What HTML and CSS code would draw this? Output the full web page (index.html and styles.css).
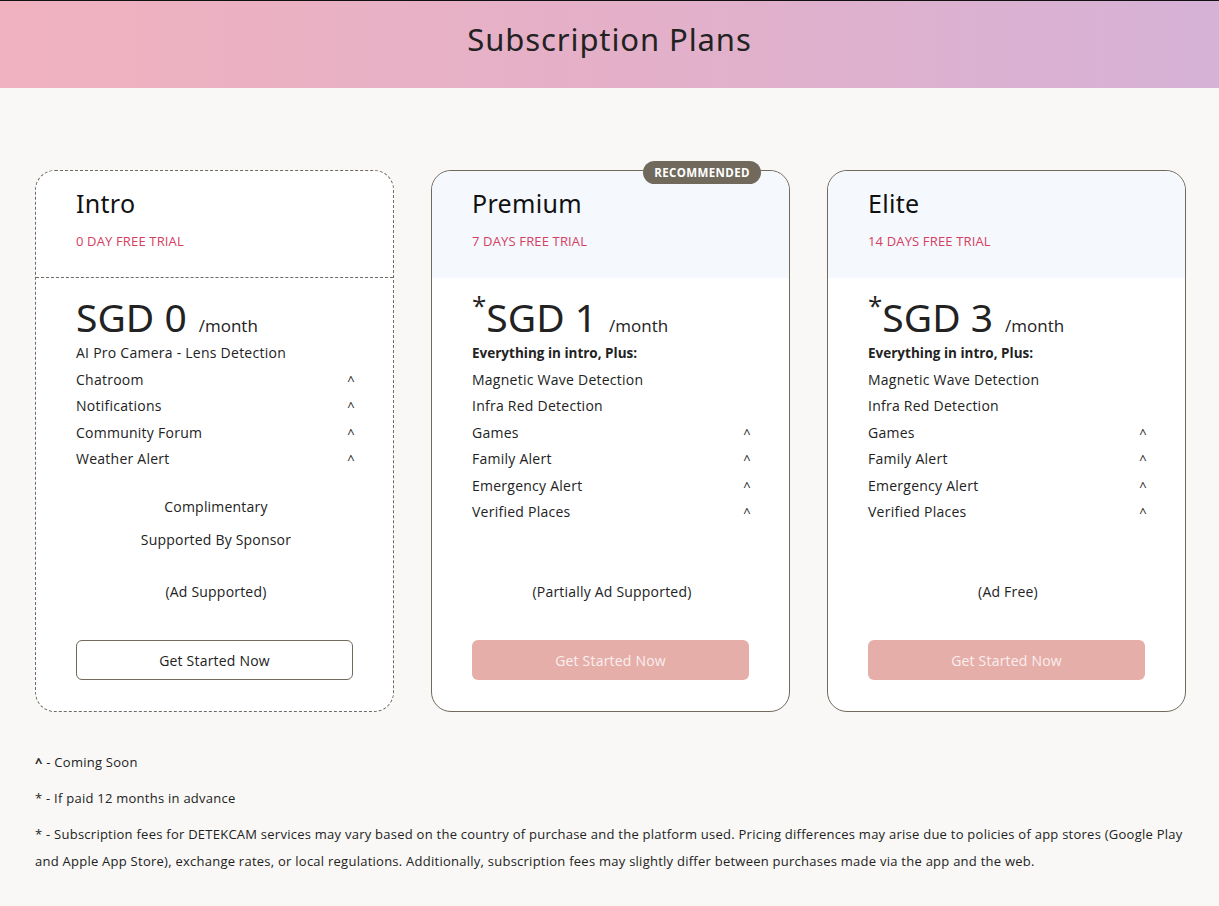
FILE: index.html
```html
<!DOCTYPE html>
<html lang="en">
<head>
<meta charset="utf-8">
<title>Subscription Plans</title>
<link rel="stylesheet" href="styles.css">
</head>
<body>
<header class="hero">
  <h1 class="hero-title">Subscription Plans</h1>
</header>
<main class="page">
  <section class="plans">
    <article class="card card-intro">
      <div class="card-head">
        <h2 class="plan-name">Intro</h2>
        <p class="trial trial-intro">0 DAY FREE TRIAL</p>
      </div>
      <div class="card-body">
        <div class="price"><span class="amount">SGD 0</span><span class="per">/month</span></div>
        <ul class="features">
          <li><span>AI Pro Camera - Lens Detection</span></li>
          <li><span>Chatroom</span><span class="soon">^</span></li>
          <li><span>Notifications</span><span class="soon">^</span></li>
          <li><span>Community Forum</span><span class="soon">^</span></li>
          <li><span>Weather Alert</span><span class="soon">^</span></li>
        </ul>
        <div class="spacer"></div>
        <p class="extra">Complimentary</p>
        <p class="extra extra-2">Supported By Sponsor</p>
        <p class="note">(Ad Supported)</p>
        <button class="btn btn-outline">Get Started Now</button>
      </div>
    </article>

    <article class="card card-solid">
      <span class="badge">RECOMMENDED</span>
      <div class="card-head head-tint">
        <h2 class="plan-name">Premium</h2>
        <p class="trial">7 DAYS FREE TRIAL</p>
      </div>
      <div class="card-body">
        <div class="price"><sup class="star">*</sup><span class="amount">SGD 1</span><span class="per">/month</span></div>
        <ul class="features">
          <li class="lead"><span>Everything in intro, Plus:</span></li>
          <li><span>Magnetic Wave Detection</span></li>
          <li><span>Infra Red Detection</span></li>
          <li><span>Games</span><span class="soon">^</span></li>
          <li><span>Family Alert</span><span class="soon">^</span></li>
          <li><span>Emergency Alert</span><span class="soon">^</span></li>
          <li><span>Verified Places</span><span class="soon">^</span></li>
        </ul>
        <div class="spacer"></div>
        <p class="note">(Partially Ad Supported)</p>
        <button class="btn btn-fill">Get Started Now</button>
      </div>
    </article>

    <article class="card card-solid">
      <div class="card-head head-tint">
        <h2 class="plan-name">Elite</h2>
        <p class="trial">14 DAYS FREE TRIAL</p>
      </div>
      <div class="card-body">
        <div class="price"><sup class="star">*</sup><span class="amount">SGD 3</span><span class="per">/month</span></div>
        <ul class="features">
          <li class="lead"><span>Everything in intro, Plus:</span></li>
          <li><span>Magnetic Wave Detection</span></li>
          <li><span>Infra Red Detection</span></li>
          <li><span>Games</span><span class="soon">^</span></li>
          <li><span>Family Alert</span><span class="soon">^</span></li>
          <li><span>Emergency Alert</span><span class="soon">^</span></li>
          <li><span>Verified Places</span><span class="soon">^</span></li>
        </ul>
        <div class="spacer"></div>
        <p class="note">(Ad Free)</p>
        <button class="btn btn-fill">Get Started Now</button>
      </div>
    </article>
  </section>

  <section class="footnotes">
    <p><b class="caret">^</b> - Coming Soon</p>
    <p>* - If paid 12 months in advance</p>
    <p>* - Subscription fees for DETEKCAM services may vary based on the country of purchase and the platform used. Pricing differences may arise due to policies of app stores (Google Play and Apple App Store), exchange rates, or local regulations. Additionally, subscription fees may slightly differ between purchases made via the app and the web.</p>
  </section>
</main>
</body>
</html>
```

FILE: styles.css
```css
* { box-sizing: border-box; }
html, body { margin: 0; padding: 0; }
body {
  background: #f9f8f6;
  font-family: "Open Sans", "Liberation Sans", sans-serif;
  color: #222;
  border-top: 1px solid #111;
}
.hero {
  height: 87px;
  padding-bottom: 12px;
  background: linear-gradient(90deg, #f0b2bf 0%, #e4b0c8 50%, #d6b2d7 100%);
  display: flex;
  align-items: center;
  justify-content: center;
}
.hero-title {
  margin: 0;
  font-family: "Noto Sans", "Open Sans", sans-serif;
  font-weight: 400;
  font-size: 31px;
  color: #222;
  letter-spacing: 0.9px;
}
.page {
  padding: 82px 33px 40px 35px;
}
.plans {
  display: grid;
  grid-template-columns: repeat(3, 1fr);
  column-gap: 37px;
}
.card {
  position: relative;
  background: #fff;
  border-radius: 20px;
  min-height: 542px;
  display: flex;
  flex-direction: column;
}
.card-intro { border: 1px dashed #6e6a64; }
.card-solid { border: 1px solid #716a5c; }
.card-head {
  height: 107px;
  padding: 16px 40px 0 40px;
  border-radius: 20px 20px 0 0;
}
.card-intro .card-head { border-bottom: 1px dashed #6e6a64; }
.head-tint { background: #f5f8fd; }
.plan-name {
  margin: 0;
  font-family: "Noto Sans", "Open Sans", sans-serif;
  font-weight: 400;
  font-size: 25px;
  line-height: 32px;
  color: #111;
  letter-spacing: 0.3px;
}
.trial {
  margin: 13px 0 0;
  font-size: 13px;
  line-height: 18px;
  color: #d4405f;
  letter-spacing: 0.15px;
}
.card-body {
  flex: 1;
  display: flex;
  flex-direction: column;
  padding: 16px 37px 31px 40px;
}
.price {
  display: flex;
  align-items: baseline;
  height: 46px;
  color: #222;
}
.amount {
  font-size: 39px;
  line-height: 46px;
  font-family: "Noto Sans", "Open Sans", sans-serif;
}
.per {
  font-size: 17px;
  margin-left: 12px;
}
.star {
  font-size: 26px;
  line-height: 1;
  align-self: flex-start;
  margin-top: -2px;
}
.features {
  list-style: none;
  margin: 0;
  padding: 0;
}
.features li {
  display: flex;
  justify-content: space-between;
  font-size: 14px;
  letter-spacing: 0.25px;
  line-height: 26.5px;
  height: 26.5px;
}
.features li.lead { font-weight: 700; letter-spacing: 0; font-size: 13.5px; }
.soon { font-size: 13px; width: 10px; text-align: center; }
.spacer { flex: 1; }
.extra {
  margin: 0;
  text-align: center;
  font-size: 14px;
  letter-spacing: 0.2px;
  line-height: 20px;
}
.extra-2 { margin-top: 13px; margin-bottom: 32px; }
.note {
  margin: 0 0 38px;
  text-align: center;
  font-size: 14px;
  letter-spacing: 0.2px;
  line-height: 20px;
}
.btn {
  display: block;
  width: calc(100% - 3px);
  height: 40px;
  border-radius: 6px;
  font-family: inherit;
  font-size: 14px;
  letter-spacing: 0.2px;
  cursor: pointer;
}
.btn-outline {
  background: #fff;
  border: 1px solid #716a5c;
  color: #222;
}
.btn-fill {
  background: #e5aea9;
  border: none;
  color: #fbeeee;
}
.badge {
  position: absolute;
  top: -10px;
  right: 28px;
  height: 23px;
  padding: 0 11px;
  border-radius: 12px;
  background: #716a5c;
  color: #fff;
  font-size: 11.5px;
  font-weight: 700;
  line-height: 23px;
  letter-spacing: 0.4px;
}
.footnotes {
  margin-top: 37px;
  font-size: 13px;
  letter-spacing: 0.25px;
  line-height: 27px;
  color: #222;
}
.footnotes p { margin: 0 0 9px; }
.caret { font-weight: 700; }
```
